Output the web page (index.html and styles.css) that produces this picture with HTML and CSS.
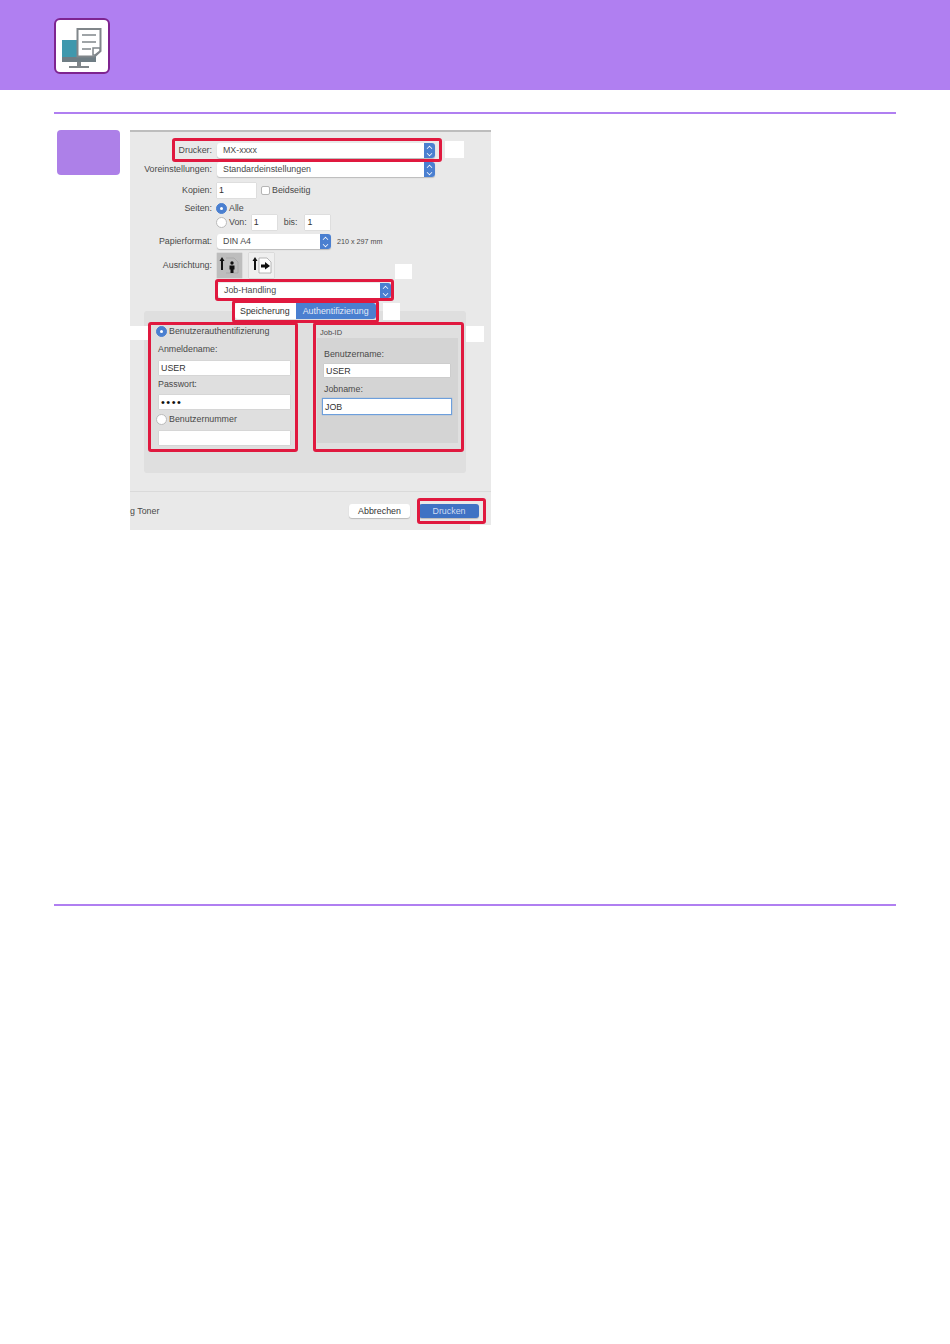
FILE: index.html
```html
<!DOCTYPE html>
<html lang="de">
<head>
<meta charset="utf-8">
<title>Drucken</title>
<link rel="stylesheet" href="styles.css">
</head>
<body>
<header class="banner">
  <div class="app-icon">
    <svg width="52" height="52" viewBox="0 0 52 52">
      <rect x="6" y="20" width="34" height="22" fill="#3f98ad"/>
      <rect x="6" y="37" width="34" height="5" fill="#6f7d84"/>
      <rect x="21" y="42" width="4" height="4" fill="#80868a"/>
      <rect x="13" y="46" width="20" height="2" fill="#80868a"/>
      <path d="M21.500 9H44.500V31L38.500 36.500H21.500Z" fill="#fff" stroke="#80868a" stroke-width="2"/>
      <path d="M26 15H40M26 22H40M26 29H35" stroke="#80868a" stroke-width="1.500" fill="none"/>
      <path d="M37 28H44V31L39 35H37Z" fill="#fff" stroke="#80868a" stroke-width="1.500"/>
    </svg>
  </div>
</header>
<main class="content">
  <div class="rule rule-top"></div>
  <section class="step">
    <div class="step-badge"></div>
    <div class="dialog">
      <div class="row row-drucker">
        <span class="label">Drucker:</span>
        <div class="select select-wide"><span>MX-xxxx</span><i class="stepper"></i></div>
      </div>
      <div class="row row-preset">
        <span class="label">Voreinstellungen:</span>
        <div class="select select-wide"><span>Standardeinstellungen</span><i class="stepper"></i></div>
      </div>
      <div class="row row-copies">
        <span class="label">Kopien:</span>
        <div class="field field-copies">1</div>
        <i class="checkbox"></i><span>Beidseitig</span>
      </div>
      <div class="row row-pages">
        <span class="label">Seiten:</span>
        <i class="radio radio-on"></i><span>Alle</span>
      </div>
      <div class="row row-range">
        <span class="label"></span>
        <i class="radio"></i><span>Von:</span>
        <div class="field field-page">1</div>
        <span class="bis">bis:</span>
        <div class="field field-page">1</div>
      </div>
      <div class="row row-paper">
        <span class="label">Papierformat:</span>
        <div class="select select-paper"><span>DIN A4</span><i class="stepper"></i></div>
        <span class="paper-size">210 x 297 mm</span>
      </div>
      <div class="row row-orient">
        <span class="label">Ausrichtung:</span>
        <div class="orient orient-on">
          <svg width="25" height="25" viewBox="0 0 25 25"><path d="M5 7V17" stroke="#111" stroke-width="2"/><path d="M2.500 8L5 4L7.500 8Z" fill="#111"/><path d="M9 5H17L21 9V20H9" fill="none" stroke="#a5a5a5" stroke-width=".8"/><circle cx="15" cy="10" r="1.700" fill="#111"/><path d="M12.500 12.500H17.500V16.500H16.500V20H13.500V16.500H12.500Z" fill="#111"/></svg>
        </div>
        <div class="orient">
          <svg width="25" height="25" viewBox="0 0 25 25"><path d="M6 7V17" stroke="#111" stroke-width="2"/><path d="M3.500 8L6 4L8.500 8Z" fill="#111"/><path d="M10 5H18L22 9V20H10Z" fill="#fff" stroke="#a5a5a5" stroke-width=".8"/><path d="M12 11.500H16V9L21 13L16 16.500V14.500H12Z" fill="#111"/></svg>
        </div>
      </div>
      <div class="row row-job">
        <div class="select select-job"><span>Job-Handling</span><i class="stepper"></i></div>
      </div>
      <div class="tabs">
        <span class="tab">Speicherung</span>
        <span class="tab tab-on">Authentifizierung</span>
      </div>
      <div class="panel">
        <div class="auth">
          <div class="radio-line first"><i class="radio radio-on"></i><span>Benutzerauthentifizierung</span></div>
          <div class="field-label login-label">Anmeldename:</div>
          <div class="field field-auth">USER</div>
          <div class="field-label pass-label">Passwort:</div>
          <div class="field field-auth dots">••••</div>
          <div class="radio-line"><i class="radio"></i><span>Benutzernummer</span></div>
          <div class="field field-auth number"></div>
        </div>
        <div class="job">
          <div class="job-title">Job-ID</div>
          <div class="job-group">
            <div class="field-label">Benutzername:</div>
            <div class="field field-user">USER</div>
            <div class="field-label job-label">Jobname:</div>
            <div class="field field-focus">JOB</div>
          </div>
        </div>
      </div>
      <div class="footer">
        <span class="toner">g Toner</span>
        <span class="btn">Abbrechen</span>
        <span class="btn btn-primary">Drucken</span>
      </div>

      <div class="mark mark-drucker"></div>
      <div class="mark mark-job"></div>
      <div class="mark mark-tabs"></div>
      <div class="mark mark-auth"></div>
      <div class="mark mark-id"></div>
      <div class="mark mark-print"></div>
      <div class="patch patch-a"></div>
      <div class="patch patch-b"></div>
      <div class="patch patch-c"></div>
      <div class="patch patch-d"></div>
      <div class="patch patch-e"></div>
      <div class="patch patch-f"></div>
    </div>
  </section>
  <div class="rule rule-bottom"></div>
</main>
</body>
</html>
```
FILE: styles.css
```css
* { box-sizing: border-box; }
html, body { margin: 0; padding: 0; background: #fff; }
body { height: 1344px; overflow: hidden; font: 8.85px/11px "Liberation Sans", Arial, sans-serif; color: #4a4a4a; }

.banner { height: 90px; background: #b07ff1; padding: 18px 0 0 54px; }
.app-icon { width: 56px; height: 56px; background: #fff; border: 2px solid #7e2490; border-radius: 6px; }
.app-icon svg { display: block; }

.content { padding: 22px 54px 0; }
.rule { height: 2px; background: #b07ff1; }
.step { display: flex; height: 400px; margin-top: 16px; }
.rule-bottom { margin-top: 374px; }
.step-badge { width: 63px; height: 45px; margin-left: 3px; margin-right: 10px; background: #ad80e8; border-radius: 4px; }

.dialog { position: relative; width: 361px; height: 400px; background: #e9e9e9; border-top: 2px solid #bdbdbd; padding-top: 11px; }

.row { display: flex; align-items: center; height: 15px; }
.label { width: 82px; margin-right: 5px; text-align: right; flex: none; }
.row-preset { margin-top: 4px; }
.row-copies { margin-top: 6px; }
.row-pages { margin-top: 4px; height: 13px; }
.row-pages .radio, .row-range .radio { margin-left: -1px; margin-right: 2px; }
.row-range { margin-top: 0; }
.row-paper { margin-top: 4px; }
.row-orient { margin-top: 2px; height: 28px; }
.row-job { margin-top: 4px; padding-left: 88px; }

.select { display: flex; align-items: center; justify-content: space-between; height: 15px; padding-left: 6px; background: #fff; border-radius: 3px; box-shadow: 0 1px 1px #bbb; }
.select-wide { width: 218px; }
.select-paper { width: 114px; }
.select-job { width: 173px; }
.stepper { position: relative; width: 11px; height: 15px; background: #4a7fd0; border-radius: 0 3px 3px 0; }
.stepper::before { content: ""; position: absolute; left: 3px; top: 3px; width: 4px; height: 4px; border: solid #fff; border-width: 1px 0 0 1px; transform: rotate(45deg) scale(.8); }
.stepper::after { content: ""; position: absolute; left: 3px; top: 8px; width: 4px; height: 4px; border: solid #fff; border-width: 0 1px 1px 0; transform: rotate(45deg) scale(.8); }

.field { height: 15px; padding: 2px 2px; background: #fff; box-shadow: 0 0 1px #aaa; color: #333; }
.field-copies { width: 39px; margin-right: 5px; }
.field-page { width: 25px; margin-left: 5px; }
.bis { margin-left: 7px; margin-right: 3px; }
.paper-size { margin-left: 6px; font-size: 7.2px; }

.checkbox { width: 9px; height: 9px; margin-right: 2px; background: #fff; border: 1px solid #b5b5b5; border-radius: 2px; }
.radio { position: relative; width: 11px; height: 11px; margin-right: 3px; flex: none; background: #fff; border: 1px solid #bbb; border-radius: 50%; }
.radio-on { background: #4a7fd0; border-color: #4a7fd0; }
.radio-on::after { content: ""; position: absolute; left: 3px; top: 3px; width: 3px; height: 3px; background: #fff; border-radius: 50%; }

.orient { display: flex; width: 25px; height: 25px; margin-right: 7px; background: #efefef; box-shadow: 0 0 1px #999; }
.orient-on { background: #bdbdbd; }

.tabs { position: absolute; top: 171px; left: 105px; display: flex; height: 16px; background: #fff; border-radius: 3px; line-height: 16px; overflow: hidden; z-index: 1; }
.tab { padding: 0 6px 0 5px; color: #333; }
.tab-on { width: 80px; padding: 0; text-align: center; background: #4a7fd0; color: #e3eaf6; }

.panel { display: flex; width: 322px; height: 162px; margin: 13px 0 0 14px; padding: 11px 0 0 5px; background: #dfdfdf; border-radius: 3px; }
.auth { width: 158px; padding: 3px 0 0 7px; }
.radio-line { display: flex; align-items: center; height: 13px; margin-top: 4px; }
.radio-line.first { margin-top: 0; }
.auth .radio { margin-right: 2px; }
.field-label { height: 11px; }
.login-label { margin: 6px 0 0 2px; }
.field-auth { width: 131px; height: 14px; margin: 6px 0 0 3px; }
.pass-label { margin: 4px 0 0 2px; }
.dots { margin-top: 5px; font-size: 11px; line-height: 10px; letter-spacing: 1.5px; color: #111; }
.number { margin-top: 5px; }
.job { width: 147px; margin-left: 6px; padding-left: 4px; }
.job-title { height: 16px; padding: 5px 0 0 3px; font-size: 7.500px; line-height: 11px; }
.job-group { width: 141px; height: 105px; padding: 11px 0 0 7px; background: #d4d4d4; }
.field-user { width: 126px; height: 13px; margin-top: 4px; padding-top: 3px; line-height: 9px; }
.job-label { margin-top: 7px; }
.field-focus { width: 128px; height: 15px; margin: 4px 0 0 -1px; padding-top: 3px; box-shadow: 0 0 1px 1px #6d9fdc; }

.footer { display: flex; align-items: center; height: 39px; margin-top: 18px; padding-right: 12px; border-top: 1px solid #dadada; }
.toner { flex: 1; }
.btn { width: 61px; height: 14px; text-align: center; line-height: 14px; background: #fff; border-radius: 3px; box-shadow: 0 1px 1px #bbb; color: #333; }
.btn-primary { width: 60px; margin-left: 9px; background: #3f72c4; color: #cfdcf2; }

.mark { position: absolute; border: 3px solid #e0193f; border-radius: 3px; z-index: 2; }
.mark-drucker { left: 42px; top: 6px; width: 270px; height: 24px; }
.mark-job { left: 85px; top: 147px; width: 179px; height: 22px; }
.mark-tabs { left: 102px; top: 168px; width: 147px; height: 23px; }
.mark-auth { left: 18px; top: 190px; width: 150px; height: 130px; }
.mark-id { left: 183px; top: 190px; width: 151px; height: 130px; }
.mark-print { left: 287px; top: 366px; width: 69px; height: 26px; }

.patch { position: absolute; background: #fff; }
.patch-a { left: 315px; top: 9px; width: 19px; height: 17px; }
.patch-b { left: 265px; top: 132px; width: 17px; height: 15px; }
.patch-c { left: 253px; top: 171px; width: 17px; height: 17px; }
.patch-d { left: 0; top: 194px; width: 18px; height: 14px; }
.patch-e { left: 336px; top: 194px; width: 18px; height: 16px; }
.patch-f { left: 340px; top: 393px; width: 21px; height: 5px; }
```
